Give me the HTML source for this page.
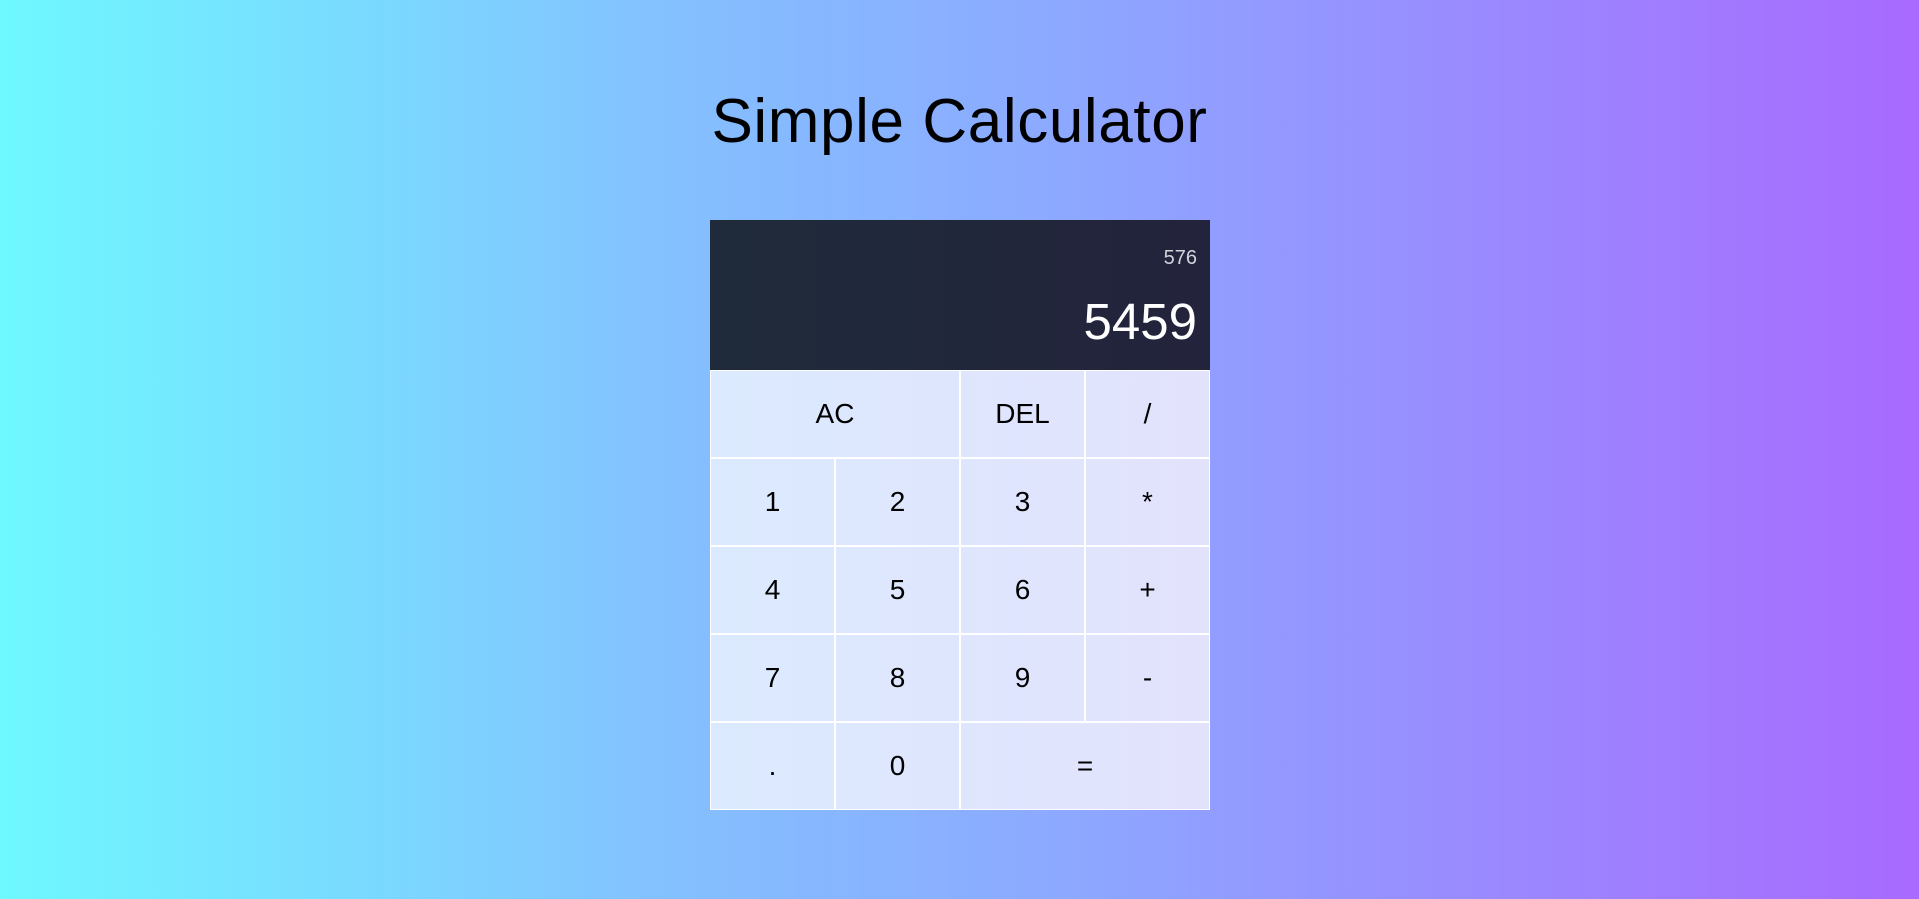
<!DOCTYPE html>
<html><head><meta charset="utf-8"><style>
*{box-sizing:border-box;margin:0;padding:0}
html,body{width:1919px;height:899px;overflow:hidden}
body{background:linear-gradient(to right,#6ef8ff,#84c0ff 35%,#8ca9ff 55%,#a86aff);font-family:"Liberation Sans",sans-serif;position:relative}
h1{position:absolute;top:86px;left:0;width:1919px;text-align:center;font-weight:400;font-size:62px;color:#000;letter-spacing:0.6px}
.calc{position:absolute;left:710px;top:220px;width:500px;display:grid;grid-template-columns:repeat(4,125px);grid-template-rows:150px repeat(5,88px)}
.disp{grid-column:1/-1;background:linear-gradient(to right,#1f2b3b,#23233b);display:flex;flex-direction:column;justify-content:space-around;align-items:flex-end;padding:12px 13px 8px;color:#fff}
.prev{font-size:20px;color:#cfd3dc;margin-top:4px}
.cur{font-size:51px}
.b{border:1px solid #fff;font-size:28px;display:flex;align-items:center;justify-content:center;color:#000}
.s2{grid-column:span 2}
.grid-bg{position:absolute;left:710px;top:370px;width:500px;height:440px;background:linear-gradient(to right,#dbeafe,#e2e2fd)}
</style></head><body>
<h1>Simple Calculator</h1>
<div class="grid-bg"></div>
<div class="calc">
<div class="disp"><div class="prev">576</div><div class="cur">5459</div></div>
<div class="b s2">AC</div><div class="b">DEL</div><div class="b">/</div>
<div class="b">1</div><div class="b">2</div><div class="b">3</div><div class="b">*</div>
<div class="b">4</div><div class="b">5</div><div class="b">6</div><div class="b">+</div>
<div class="b">7</div><div class="b">8</div><div class="b">9</div><div class="b">-</div>
<div class="b">.</div><div class="b">0</div><div class="b s2">=</div>
</div>
</body></html>
